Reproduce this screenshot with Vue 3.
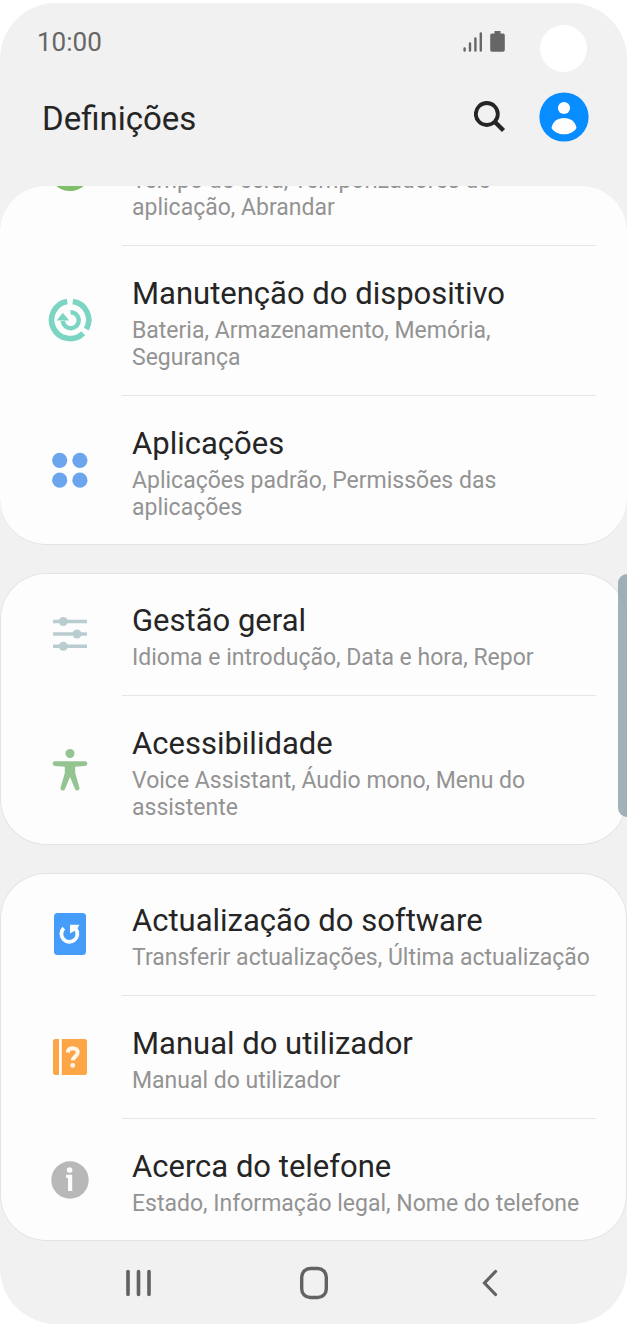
<script setup>
const groups = [
  {
    id: 'device',
    rows: [
      { icon: 'wellbeing', sub: 'Tempo de ecrã, Temporizadores de aplicação, Abrandar', partial: true },
      { icon: 'care', title: 'Manutenção do dispositivo', sub: 'Bateria, Armazenamento, Memória, Segurança' },
      { icon: 'apps', title: 'Aplicações', sub: 'Aplicações padrão, Permissões das aplicações' },
    ],
  },
  {
    id: 'general',
    rows: [
      { icon: 'sliders', title: 'Gestão geral', sub: 'Idioma e introdução, Data e hora, Repor' },
      { icon: 'access', title: 'Acessibilidade', sub: 'Voice Assistant, Áudio mono, Menu do assistente' },
    ],
  },
  {
    id: 'about',
    rows: [
      { icon: 'update', title: 'Actualização do software', sub: 'Transferir actualizações, Última actualização' },
      { icon: 'manual', title: 'Manual do utilizador', sub: 'Manual do utilizador' },
      { icon: 'info', title: 'Acerca do telefone', sub: 'Estado, Informação legal, Nome do telefone' },
    ],
  },
]
</script>

<template>
  <div class="phone">
    <div class="status">
      <span class="clock">10:00</span>
      <svg class="signal" width="20" height="22" viewBox="0 0 20 22" fill="none" stroke="#666" stroke-width="2.4" stroke-linecap="round">
        <path d="M1.6 17.500v2M7 12.500v7M12.400 7.500v12M17.800 2.500v17" />
      </svg>
      <svg class="battery" width="15" height="22" viewBox="0 0 15 22" fill="#666">
        <path d="M4.500 0h6V2.500H13a1.800 1.800 0 0 1 1.800 1.800v14.600a1.800 1.800 0 0 1-1.800 1.800H2A1.800 1.800 0 0 1 .2 18.900V4.300A1.800 1.800 0 0 1 2 2.500h2.500z" />
      </svg>
      <span class="camera"></span>
    </div>

    <header class="header">
      <h1>Definições</h1>
      <button class="search" type="button" aria-label="Pesquisar">
        <svg width="32" height="32" viewBox="0 0 32 32" fill="none" stroke="#252525" stroke-width="3.800">
          <circle cx="12.800" cy="13" r="11" />
          <path d="M20.500 20.500L29.500 29.500" stroke-width="4.400" />
        </svg>
      </button>
      <button class="account" type="button" aria-label="Conta">
        <svg width="50" height="50" viewBox="0 0 50 50">
          <circle cx="25" cy="25" r="24.600" fill="#078dff" />
          <circle cx="25" cy="16" r="6.100" fill="#fdfdfd" />
          <path d="M12.500 36C13.500 29.500 18.500 26 25 26s11.500 3.500 12.500 10C35 40 30.500 42.300 25 42.300s-10-2.300-12.500-6.300z" fill="#fdfdfd" />
        </svg>
      </button>
    </header>

    <main class="list">
      <section v-for="g in groups" :key="g.id" class="card" :class="g.id">
        <a v-for="r in g.rows" :key="r.icon" href="#" class="row" :class="{ partial: r.partial }">
          <svg class="icon" width="48" height="48" viewBox="0 0 48 48">
            <circle v-if="r.icon === 'wellbeing'" cx="24" cy="24" r="21" fill="#7fbf6a" />
            <g v-else-if="r.icon === 'care'" fill="none" stroke="#7bd5c2">
              <path d="M26.800 5.600A18.600 18.600 0 0 1 40.300 33.200" stroke-width="5.600" />
              <path d="M21.200 5.600A18.600 18.600 0 1 0 37.200 37.200" stroke-width="5.600" />
              <path d="M24.500 16.300A8 8 0 1 1 16.800 25" stroke-width="4.400" />
              <path d="M16.800 16.800L23.200 24.600H10.600z" fill="#7bd5c2" stroke="none" />
            </g>
            <g v-else-if="r.icon === 'apps'" fill="#6ba5ee">
              <circle cx="13.700" cy="14.300" r="7.600" />
              <circle cx="33.900" cy="14.300" r="7.600" />
              <circle cx="13.700" cy="34.200" r="7.600" />
              <circle cx="33.900" cy="34.200" r="7.600" />
            </g>
            <g v-else-if="r.icon === 'sliders'" fill="#b9cdd1">
              <path d="M7 9.700h34v3.600H7zM7 22.200h34v3.600H7zM7 34.400h34V38H7z" />
              <circle cx="17.300" cy="11.500" r="4.500" />
              <circle cx="31" cy="24" r="4.500" />
              <circle cx="17.300" cy="36.200" r="4.500" />
            </g>
            <g v-else-if="r.icon === 'access'" fill="#95c493">
              <circle cx="24" cy="7.500" r="4.500" />
              <path d="M9 15.200h30a2.400 2.400 0 0 1 0 4.800l-9.800.8v6.200l4.200 14.600c.8 3-3.400 4.200-4.400 1.400L24 31l-5 12c-1 2.800-5.200 1.600-4.400-1.400L18.800 27v-6.200L9 20a2.400 2.400 0 0 1 0-4.800z" />
            </g>
            <g v-else-if="r.icon === 'update'">
              <rect x="8" y="3" width="32" height="42" rx="3.500" fill="#459df9" />
              <path d="M17.800 18.100A8 8 0 1 0 29.600 18.800" fill="none" stroke="#fdfdfd" stroke-width="3.800" />
              <path d="M24 14.800H33.400L30.800 19.500L24 23.500z" fill="#fdfdfd" />
            </g>
            <g v-else-if="r.icon === 'manual'">
              <path d="M9.500 6H13v36H9.500A2.500 2.500 0 0 1 7 39.500v-31A2.500 2.500 0 0 1 9.500 6zM15.800 6H38.500A2.500 2.500 0 0 1 41 8.500v31a2.500 2.500 0 0 1-2.500 2.500H15.800z" fill="#fca647" />
              <path d="M21.700 19.500c.3-3 2.500-4.300 5-4.300 3 0 5 1.700 5 4.200 0 4-4.900 4.200-4.900 8.200" fill="none" stroke="#fff8ea" stroke-width="4" />
              <circle cx="26.700" cy="32.400" r="2.400" fill="#fff8ea" />
            </g>
            <g v-else>
              <circle cx="24" cy="24" r="18.700" fill="#b8b8b8" />
              <circle cx="23.600" cy="14" r="2.800" fill="#fdfdfd" />
              <path d="M20.200 18.800h6v16.200h-4.200V22h-1.800z" fill="#fdfdfd" />
            </g>
          </svg>
          <span class="text">
            <span v-if="r.title" class="title">{{ r.title }}</span>
            <span class="sub">{{ r.sub }}</span>
          </span>
        </a>
      </section>
      <span class="scrollbar"></span>
    </main>

    <nav class="nav">
      <button type="button" aria-label="Recentes">
        <svg width="32" height="32" viewBox="0 0 32 32" fill="none" stroke="#626262" stroke-width="3.600" stroke-linecap="round">
          <path d="M6 4.500v23M16.500 4.500v23M27 4.500v23" />
        </svg>
      </button>
      <button type="button" aria-label="Início">
        <svg width="32" height="36" viewBox="0 0 32 36" fill="none" stroke="#626262" stroke-width="3.400">
          <rect x="3.700" y="3.500" width="24.600" height="29" rx="8.500" />
        </svg>
      </button>
      <button type="button" aria-label="Voltar">
        <svg width="32" height="32" viewBox="0 0 32 32" fill="none" stroke="#626262" stroke-width="3.200" stroke-linecap="round">
          <path d="M22.500 4.500L11.500 16l11 11.500" />
        </svg>
      </button>
    </nav>
  </div>
</template>

<style>
body {
  background: #fff;
}
</style>

<style scoped>
.phone {
  margin-top: 3px;
  border-radius: 56px;
  background: #f1f1f1;
  overflow: hidden;
  font-family: Roboto, "Noto Sans", sans-serif;
  color: #252525;
}
.status {
  display: flex;
  align-items: center;
  height: 78px;
  padding: 0 40px 0 37px;
}
.clock {
  flex: 1;
  font-size: 26px;
  line-height: 30px;
  color: #666;
}
.signal {
  margin-right: 7px;
}
.camera {
  width: 47px;
  height: 47px;
  margin: 12px 0 0 35px;
  border-radius: 50%;
  background: #fff;
}
.header {
  display: flex;
  align-items: center;
  height: 105px;
  padding: 0 38px 34px 42px;
  box-sizing: border-box;
}
h1 {
  flex: 1;
  margin: 0;
  padding-top: 4px;
  font-size: 33px;
  line-height: 40px;
  font-weight: 400;
}
button {
  display: flex;
  align-items: center;
  justify-content: center;
  padding: 0;
  border: 0;
  background: none;
}
.search {
  margin-right: 33px;
}
.list {
  position: relative;
  display: flex;
  flex-direction: column;
  gap: 28px;
}
.card {
  border-radius: 46px;
  background: #fdfdfd;
  box-shadow: inset 0 0 0 1px #e3e3e3;
  overflow: hidden;
}
.card.device {
  box-shadow: inset 0 -1px 0 #e3e3e3;
}
.row {
  display: flex;
  align-items: center;
  color: inherit;
  text-decoration: none;
}
.icon {
  flex: none;
  margin: 0 28px 0 46px;
}
.text {
  flex: 1;
  margin-right: 31px;
  padding: 24px 0 24px 10px;
}
.row + .row .text {
  border-top: 1px solid #e6e6e6;
}
.title,
.sub {
  display: block;
}
.title {
  font-size: 31px;
  line-height: 47px;
}
.sub {
  font-size: 23px;
  line-height: 27px;
  color: #939393;
}
.partial {
  align-items: flex-start;
  margin-top: -19px;
}
.partial .icon {
  margin-top: -21px;
}
.partial .text {
  padding-top: 0;
}
.scrollbar {
  position: absolute;
  right: 0;
  top: 388px;
  width: 9px;
  height: 243px;
  border-radius: 9px 0 0 9px;
  background: rgba(139, 159, 167, 0.8);
}
.nav {
  display: flex;
  justify-content: space-between;
  align-items: center;
  height: 83px;
  padding: 0 122px;
}
</style>
